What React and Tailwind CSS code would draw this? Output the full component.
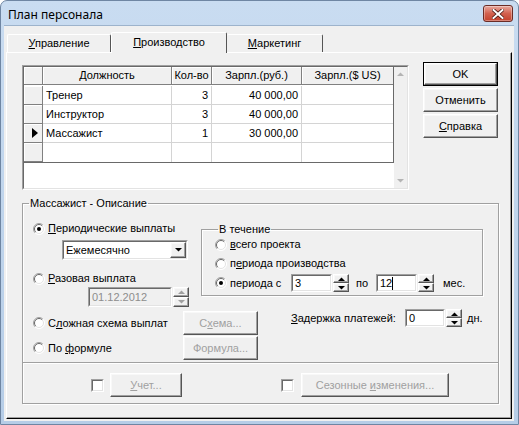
import React from 'react';

const font = "font-['Liberation_Sans',Arial,sans-serif]";

function Raised({ className = '', children }) {
  return (
    <div
      className={`border border-t-white border-l-white border-r-[#555] border-b-[#555] shadow-[inset_-1px_-1px_0_#a0a0a0,inset_1px_1px_0_#f8f8f8] bg-[#f0f0f0] flex items-center justify-center ${className}`}
    >
      {children}
    </div>
  );
}

function Sunken({ className = '', children }) {
  return (
    <div className={`border border-t-[#a0a0a0] border-l-[#a0a0a0] border-r-white border-b-white ${className}`}>
      <div className="h-full w-full border border-t-[#696969] border-l-[#696969] border-r-[#e3e3e3] border-b-[#e3e3e3] flex items-center">
        {children}
      </div>
    </div>
  );
}

function Arrow({ dir = 'down', color = '#000' }) {
  return (
    <svg width="7" height="4" viewBox="0 0 7 4">
      {dir === 'up' ? (
        <path d="M0 4 L3.5 0.5 L7 4Z" fill={color} />
      ) : (
        <path d="M0 0 L7 0 L3.5 3.5Z" fill={color} />
      )}
    </svg>
  );
}

function Spin({ className = '', disabled }) {
  const c = disabled ? '#a0a0a0' : '#000';
  return (
    <div className={`flex flex-col w-[16px] ${className}`}>
      <Raised className="flex-1">
        <Arrow dir="up" color={c} />
      </Raised>
      <Raised className="flex-1">
        <Arrow dir="down" color={c} />
      </Raised>
    </div>
  );
}

function Radio({ checked, children, className = '' }) {
  return (
    <div className={`flex items-center h-[13px] ${className}`}>
      <svg width="12" height="12" viewBox="0 0 12 12" className="shrink-0">
        <circle cx="6" cy="6" r="5.5" fill="#fff" />
        <path d="M2.1 9.9 A5.5 5.5 0 0 1 9.9 2.1" fill="none" stroke="#a0a0a0" />
        <path d="M2.8 9.2 A4.5 4.5 0 0 1 9.2 2.8" fill="none" stroke="#696969" />
        <path d="M9.9 2.1 A5.5 5.5 0 0 1 2.1 9.9" fill="none" stroke="#fff" />
        <path d="M9.2 2.8 A4.5 4.5 0 0 1 2.8 9.2" fill="none" stroke="#e3e3e3" />
        {checked && <circle cx="6" cy="6" r="2" fill="#000" />}
      </svg>
      <span className="ml-[3px] whitespace-nowrap leading-[13px]">{children}</span>
    </div>
  );
}

function Check({ className = '' }) {
  return (
    <div className={`w-[13px] h-[13px] border border-t-[#a0a0a0] border-l-[#a0a0a0] border-r-white border-b-white ${className}`}>
      <div className="h-full w-full bg-white border border-t-[#696969] border-l-[#696969] border-r-[#e3e3e3] border-b-[#e3e3e3]" />
    </div>
  );
}

function Group({ label, className = '', legendClass = '', children }) {
  return (
    <fieldset
      className={`border border-[#a0a0a0] shadow-[inset_1px_1px_0_#fff,1px_1px_0_#fff] min-w-0 ${className}`}
    >
      <legend className={`leading-[14px] px-[1px] ${legendClass}`}>{label}</legend>
      {children}
    </fieldset>
  );
}

const rows = [
  ['Тренер', '3', '40 000,00'],
  ['Инструктор', '3', '40 000,00'],
  ['Массажист', '1', '30 000,00'],
  ['', '', ''],
];

function Grid() {
  const fixed = 'bg-[#f0f0f0] border-r border-b border-r-[#808080] border-b-[#808080] shadow-[inset_1px_1px_0_#fff]';
  const cell = 'bg-white border-r border-b border-r-[#d4d4d4] border-b-[#d4d4d4] px-[3px] flex items-center whitespace-nowrap';
  return (
    <div className="w-[387px] h-[125px] mt-[3px] border border-t-[#a0a0a0] border-l-[#a0a0a0] border-r-white border-b-white">
      <div className="h-full w-full border border-t-[#696969] border-l-[#696969] border-r-[#e3e3e3] border-b-[#e3e3e3] flex bg-white">
        <div className="w-[370px] self-start border-r border-b border-[#696969] grid grid-cols-[19px_129px_40px_90px_91px] auto-rows-[19px] [&>*:nth-child(-n+5)]:h-[18px]">
          <div className={fixed} />
          <div className={`${fixed} flex items-center justify-center`}>Должность</div>
          <div className={`${fixed} flex items-center justify-center`}>Кол-во</div>
          <div className={`${fixed} flex items-center justify-center`}>Зарпл.(руб.)</div>
          <div className={`${fixed} flex items-center justify-center border-r-0`}>Зарпл.($ US)</div>
          {rows.map((r, i) => (
            <React.Fragment key={i}>
              <div className={`${fixed} flex items-center justify-center pl-[4px]`}>
                {i === 2 && (
                  <svg width="6" height="10" viewBox="0 0 6 10">
                    <path d="M0 0 L6 5 L0 10Z" fill="#000" />
                  </svg>
                )}
              </div>
              <div className={`${cell} ${i === 3 ? 'border-b-0' : ''}`}>{r[0]}</div>
              <div className={`${cell} justify-end ${i === 3 ? 'border-b-0' : ''}`}>{r[1]}</div>
              <div className={`${cell} justify-end ${i === 3 ? 'border-b-0' : ''}`}>{r[2]}</div>
              <div className={`${cell} border-r-0 ${i === 3 ? 'border-b-0' : ''}`} />
            </React.Fragment>
          ))}
        </div>
        <div className="flex-1 bg-[#f0f0f0] flex flex-col justify-between items-center py-[5px]">
          <Arrow dir="up" color="#b4b4b4" />
          <Arrow dir="down" color="#b4b4b4" />
        </div>
      </div>
    </div>
  );
}

export default function App() {
  return (
    <div className={`w-[519px] h-[425px] overflow-hidden rounded-t-[7px] border border-[#6f86a3] bg-linear-to-b from-[#c9dcf1] to-[#b6cde7] flex flex-col text-[11px] text-black ${font}`}>
      <div className="h-[24px] flex items-start shrink-0">
        <span className="ml-[7px] mt-[6px] text-[12px] font-['Segoe_UI','Noto_Sans',sans-serif] leading-[16px]">План персонала</span>
        <div className="ml-auto mr-[5px] mt-[4px] w-[30px] h-[17px] rounded-[3px] border border-[#6b2c26] bg-linear-to-b from-[#e8a99f] via-[#d2614f] to-[#c4412c] flex items-center justify-center shadow-[inset_0_0_0_1px_rgba(255,255,255,0.35)]">
          <svg width="12" height="10" viewBox="0 0 12 10">
            <path d="M1.5 1 L10.5 9 M10.5 1 L1.5 9" stroke="#4a1a14" strokeWidth="3.6" strokeLinecap="square" />
            <path d="M1.5 1 L10.5 9 M10.5 1 L1.5 9" stroke="#fff" strokeWidth="2" strokeLinecap="square" />
          </svg>
        </div>
      </div>

      <div className="ml-[3px] mr-[4px] h-[396px] bg-[#f0f0f0] border-t border-[#9db3cc]">
        <div className="h-[26px] flex items-end pl-[3px]">
          <div className="w-[104px] h-[18px] border-t border-l border-r border-t-white border-l-white border-r-[#555] rounded-t-[2px] flex items-center justify-center">
            <span><span className="underline">У</span>правление</span>
          </div>
          <div className="w-[116px] h-[21px] -mb-[1px] relative z-10 bg-[#f0f0f0] border-t border-l border-r border-t-white border-l-white border-r-[#555] rounded-t-[2px] flex items-center justify-center pb-[2px]">
            <span><span className="underline">П</span>роизводство</span>
          </div>
          <div className="w-[96px] h-[18px] border-t border-r border-t-white border-r-[#555] rounded-t-[2px] flex items-center justify-center">
            <span><span className="underline">М</span>аркетинг</span>
          </div>
        </div>

        <div className="ml-[2px] w-[506px] h-[367px] border border-t-white border-l-white border-r-black border-b-black shadow-[inset_-1px_-1px_0_#a0a0a0]">
          <div className="flex items-start pl-[15px] pt-[9px]">
            <Grid />
            <div className="ml-[14px] w-[75px] flex flex-col gap-[2px]">
              <div className="h-[24px] border border-black">
                <Raised className="h-full">OK</Raised>
              </div>
              <Raised className="h-[24px]">Отменить</Raised>
              <Raised className="h-[24px]">
                <span><span className="underline">С</span>правка</span>
              </Raised>
            </div>
          </div>

          <Group label="Массажист - Описание" className="ml-[15px] mt-[6px] w-[477px] h-[208px]" legendClass="ml-[6px]">
            <div className="flex items-start">
              <div className="w-[178px] pl-[10px] flex flex-col">
                <Radio checked className="mt-[12px]">
                  <span className="underline">П</span>ериодические выплаты
                </Radio>
                <Sunken className="ml-[29px] mt-[5px] w-[126px] h-[20px] bg-white">
                  <span className="pl-[2px] flex-1">Ежемесячно</span>
                  <Raised className="w-[16px] h-[16px]">
                    <Arrow dir="down" />
                  </Raised>
                </Sunken>
                <Radio className="mt-[12px]">
                  <span className="underline">Р</span>азовая выплата
                </Radio>
                <div className="ml-[55px] mt-[2px] flex">
                  <Sunken className="w-[84px] h-[20px] bg-[#f0f0f0]">
                    <span className="pl-[2px] text-[#8d8d8d]">01.12.2012</span>
                  </Sunken>
                  <Spin disabled className="h-[20px] ml-[1px]" />
                </div>
              </div>

              <Group label="В течение" className="mt-[12px] w-[282px] pl-[13px] pb-[3px]" legendClass="ml-[3px]">
                <Radio className="mt-[2px]">
                  <span className="underline">в</span>сего проекта
                </Radio>
                <Radio className="mt-[6px]">
                  п<span className="underline">е</span>риода производства
                </Radio>
                <div className="mt-[4px] h-[18px] flex items-center">
                  <div className="w-[76px]">
                    <Radio checked>
                      перио<span className="underline">д</span>а с
                    </Radio>
                  </div>
                  <Sunken className="w-[41px] h-[18px] bg-white">
                    <span className="pl-[2px]">3</span>
                  </Sunken>
                  <Spin className="h-[18px] ml-[1px]" />
                  <span className="ml-[7px] w-[20px]">по</span>
                  <Sunken className="w-[41px] h-[18px] bg-white">
                    <span className="pl-[2px]">12</span>
                    <span className="w-[1px] h-[13px] bg-black" />
                  </Sunken>
                  <Spin className="h-[18px] ml-[1px]" />
                  <span className="ml-[9px]">мес.</span>
                </div>
              </Group>
            </div>

            <div className="flex items-start">
              <div className="flex flex-col pl-[10px] mt-[4px] gap-[1px]">
                <div className="h-[24px] flex items-center">
                  <div className="w-[150px]">
                    <Radio>
                      С<span className="underline">л</span>ожная схема выплат
                    </Radio>
                  </div>
                  <Raised className="w-[75px] h-[24px] text-[#a0a0a0]">
                    <span>С<span className="underline">х</span>ема...</span>
                  </Raised>
                </div>
                <div className="h-[24px] flex items-center">
                  <div className="w-[150px]">
                    <Radio>
                      По <span className="underline">ф</span>ормуле
                    </Radio>
                  </div>
                  <Raised className="w-[75px] h-[24px] text-[#a0a0a0]">Формула...</Raised>
                </div>
              </div>
              <div className="ml-[33px] mt-[2px] flex items-center h-[18px]">
                <span className="w-[114px]">
                  <span className="underline">З</span>адержка платежей:
                </span>
                <Sunken className="w-[40px] h-[18px] bg-white">
                  <span className="pl-[2px]">0</span>
                </Sunken>
                <Spin className="h-[18px] ml-[1px]" />
                <span className="ml-[5px]">дн.</span>
              </div>
            </div>

            <div className="mt-[2px] border-t border-b border-t-[#a0a0a0] border-b-white" />

            <div className="mt-[9px] h-[24px] flex items-center">
              <Check className="ml-[68px]" />
              <Raised className="ml-[6px] w-[72px] h-[24px] text-[#a0a0a0]">
                <span><span className="underline">У</span>чет...</span>
              </Raised>
              <Check className="ml-[99px]" />
              <Raised className="ml-[7px] w-[148px] h-[24px] text-[#a0a0a0]">
                <span>Сезонные <span className="underline">и</span>зменения...</span>
              </Raised>
            </div>
          </Group>
        </div>
      </div>
    </div>
  );
}
